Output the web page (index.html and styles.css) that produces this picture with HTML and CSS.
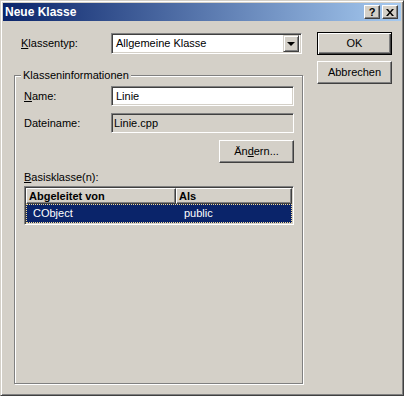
FILE: index.html
```html
<!DOCTYPE html>
<html lang="de">

<head>
    <meta charset="UTF-8">
    <title>Neue Klasse</title>
    <link rel="stylesheet" href="styles.css">
</head>

<body>
    <div class="window">
        <div class="titlebar">
            <span class="title">Neue Klasse</span>
            <div class="caption">
                <span class="capbtn help">?</span>
                <span class="capbtn close">
                    <svg width="8" height="7" viewBox="0 0 8 7">
                        <path d="M0 0h2l2 2.5L6 0h2L5 3.5 8 7H6L4 4.5 2 7H0l3-3.5z" fill="#000"/>
                    </svg>
                </span>
            </div>
        </div>
        <div class="content">
            <div class="main">
                <div class="typerow">
                    <label class="lbl"><u>K</u>lassentyp:</label>
                    <div class="combo">
                        <span>Allgemeine Klasse</span>
                        <span class="dropbtn"><i class="arrow"></i></span>
                    </div>
                </div>
                <fieldset class="group">
                    <legend>Klasseninformationen</legend>
                    <div class="row">
                        <label class="lbl"><u>N</u>ame:</label>
                        <div class="field">Linie</div>
                    </div>
                    <div class="row">
                        <label class="lbl">Dateiname:</label>
                        <div class="field readonly">Linie.cpp</div>
                    </div>
                    <div class="row right">
                        <span class="btn change">Än<u>d</u>ern...</span>
                    </div>
                    <div class="listlabel"><u>B</u>asisklasse(n):</div>
                    <div class="list">
                        <div class="head">
                            <span class="col1">Abgeleitet von</span>
                            <span class="col2">Als</span>
                        </div>
                        <div class="item selected">
                            <span class="col1">CObject</span>
                            <span class="col2">public</span>
                        </div>
                    </div>
                </fieldset>
            </div>
            <div class="side">
                <span class="btn default">OK</span>
                <span class="btn">Abbrechen</span>
            </div>
        </div>
    </div>
</body></html>
```

FILE: styles.css
```css
* {
    box-sizing: border-box;
}

html,
body {
    margin: 0;
}

body {
    font: 11px/13px "Liberation Sans", Arial, sans-serif;
    color: #000;
    background: #d4d0c8;
}

.window {
    display: flex;
    flex-direction: column;
    width: 404px;
    height: 396px;
    padding: 2px;
    background: #d4d0c8;
    border: 1px solid;
    border-color: #d4d0c8 #404040 #404040 #d4d0c8;
    box-shadow: inset 1px 1px 0 #fff, inset -1px -1px 0 #808080;
}

.titlebar {
    display: flex;
    align-items: center;
    justify-content: space-between;
    height: 18px;
    padding: 0 3px 0 2px;
    background: linear-gradient(to right, #0a246a, #a6caf0);
}

.title {
    color: #fff;
    font-weight: bold;
    font-size: 12px;
}

.caption {
    display: flex;
    gap: 2px;
}

.capbtn {
    display: flex;
    justify-content: center;
    align-items: center;
    width: 16px;
    height: 14px;
    background: #d4d0c8;
    border: 1px solid;
    border-color: #fff #404040 #404040 #fff;
    box-shadow: inset -1px -1px 0 #808080;
    font-weight: bold;
    font-size: 11px;
}

.content {
    display: flex;
    gap: 14px;
    padding: 12px 0 0 11px;
}

.main {
    display: flex;
    flex-direction: column;
    width: 289px;
}

.typerow,
.row {
    display: flex;
    align-items: center;
}

.typerow {
    height: 21px;
    padding-left: 7px;
}

.lbl {
    width: 87px;
}

.typerow .lbl {
    width: 90px;
}

.combo {
    display: flex;
    align-items: center;
    justify-content: space-between;
    width: 191px;
    height: 21px;
    padding: 2px 2px 2px 4px;
    background: #fff;
    border: 1px solid;
    border-color: #808080 #fff #fff #808080;
    box-shadow: inset 1px 1px 0 #404040, inset -1px -1px 0 #d4d0c8;
}

.dropbtn {
    display: flex;
    justify-content: center;
    align-items: center;
    width: 16px;
    height: 17px;
    background: #d4d0c8;
    border: 1px solid;
    border-color: #d4d0c8 #404040 #404040 #d4d0c8;
    box-shadow: inset 1px 1px 0 #fff, inset -1px -1px 0 #808080;
}

.arrow {
    width: 0;
    height: 0;
    border-left: 4px solid transparent;
    border-right: 4px solid transparent;
    border-top: 4px solid #000;
}

.group {
    display: flex;
    flex-direction: column;
    height: 315px;
    margin: 15px 0 0;
    padding: 4px 8px 8px 9px;
    border: 1px solid #808080;
    box-shadow: 1px 1px 0 #fff, inset 1px 1px 0 #fff;
}

.group legend {
    margin-left: -3px;
    padding: 0 2px;
    background: #d4d0c8;
}

.row {
    height: 20px;
    margin-bottom: 7px;
}

.field {
    width: 183px;
    height: 20px;
    padding: 3px 4px;
    background: #fff;
    border: 1px solid;
    border-color: #808080 #fff #fff #808080;
    box-shadow: inset 1px 1px 0 #404040, inset -1px -1px 0 #d4d0c8;
}

.field.readonly {
    padding-left: 2px;
    background: #d4d0c8;
}

.row.right {
    justify-content: flex-end;
    height: 23px;
    margin-bottom: 8px;
}

.btn {
    display: flex;
    justify-content: center;
    align-items: center;
    width: 75px;
    height: 23px;
    background: #d4d0c8;
    border: 1px solid;
    border-color: #fff #404040 #404040 #fff;
    box-shadow: inset -1px -1px 0 #808080;
}

.btn.default {
    border-color: #000;
    box-shadow: inset 1px 1px 0 #fff, inset -1px -1px 0 #404040, inset -2px -2px 0 #808080;
}

.listlabel {
    margin-bottom: 2px;
}

.list {
    flex: 1;
    background: #fff;
    border: 1px solid;
    border-color: #808080 #fff #fff #808080;
    box-shadow: inset 1px 1px 0 #404040, inset -1px -1px 0 #d4d0c8;
    padding: 1px;
}

.head,
.item {
    display: flex;
}

.head span {
    height: 16px;
    padding: 1px 2px;
    font-weight: bold;
    background: #d4d0c8;
    border: 1px solid;
    border-color: #fff #404040 #404040 #fff;
    box-shadow: inset -1px -1px 0 #808080;
}

.col1 {
    width: 150px;
}

.col2 {
    flex: 1;
}

.item {
    height: 19px;
    align-items: center;
}

.item .col1 {
    padding-left: 6px;
}

.item .col2 {
    padding-left: 7px;
}

.selected {
    color: #fff;
    background: #0a246a;
    border: 1px dotted #f5db95;
}

.side {
    display: flex;
    flex-direction: column;
    gap: 6px;
    margin-top: -1px;
}
```
